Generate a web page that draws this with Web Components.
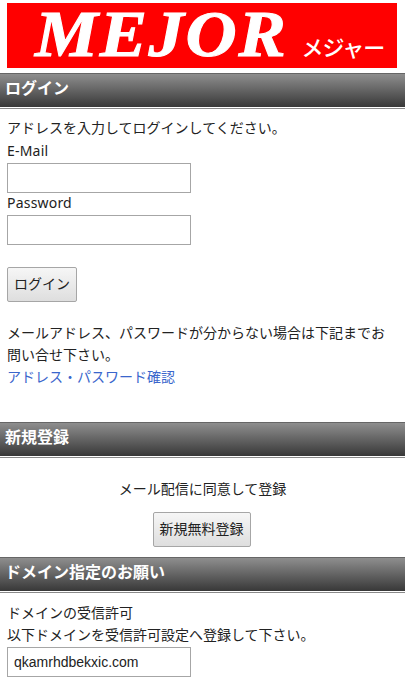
<!DOCTYPE html>
<html lang="ja">
<head>
<meta charset="utf-8">
<title>MEJOR</title>
<style>
  html, body { margin: 0; padding: 0; background: #fff; }
  body { font-family: "Noto Sans", "Noto Sans CJK JP", sans-serif; color: #222; font-size: 14px; }
</style>
</head>
<body>
<mejor-logo></mejor-logo>

<section-bar>ログイン</section-bar>
<login-form></login-form>

<section-bar>新規登録</section-bar>
<register-box></register-box>

<section-bar>ドメイン指定のお願い</section-bar>
<domain-box domain="qkamrhdbekxic.com"></domain-box>

<script>
const fieldCss = `
  .field {
    display: block;
    box-sizing: border-box;
    width: 184px;
    height: 30px;
    margin: 0;
    padding: 0 6px;
    border: 1px solid #a6a6a6;
    background: #fff;
    color: #222;
    font: 14px "Liberation Sans", sans-serif;
    outline: none;
  }
`;

const buttonCss = `
  .btn {
    display: block;
    box-sizing: border-box;
    height: 35px;
    margin: 0;
    padding: 0 6px 3px;
    border: 1px solid #a6a6a6;
    border-radius: 2px;
    background: linear-gradient(#f6f6f6, #dedede);
    color: #222;
    font: 14px "Noto Sans CJK JP", sans-serif;
  }
`;

class MejorLogo extends HTMLElement {
  constructor() {
    super();
    this.attachShadow({ mode: 'open' });
    this.shadowRoot.innerHTML = `
      <style>
        :host { display: block; padding: 3px 8px 5px 7px; }
        .logo {
          height: 65px;
          box-sizing: border-box;
          padding-left: 28px;
          background: #ff0000;
          color: #fff;
          display: flex;
          align-items: baseline;
        }
        .name {
          font: italic bold 65px/62px "Liberation Serif", serif;
          letter-spacing: 1.5px;
          -webkit-text-stroke: 1px #fff;
          transform: scaleX(1.09);
          transform-origin: left;
        }
        .kana {
          margin-left: 35px;
          font: 500 22px/24px "Noto Sans CJK JP", sans-serif;
          letter-spacing: -1px;
        }
      </style>
      <div class="logo"><span class="name">MEJOR</span><span class="kana">メジャー</span></div>
    `;
  }
}

class SectionBar extends HTMLElement {
  constructor() {
    super();
    this.attachShadow({ mode: 'open' });
    this.shadowRoot.innerHTML = `
      <style>
        :host {
          display: block;
          border-bottom: 1px solid #8a8a8a;
          padding-bottom: 1px;
        }
        .bar {
          box-sizing: border-box;
          height: 34px;
          padding: 0 0 7px 5px;
          border-top: 1px solid #666;
          background: linear-gradient(#8e8e8e, #383838);
          color: #fff;
          display: flex;
          align-items: center;
          font: bold 16px "Noto Sans CJK JP", sans-serif;
        }
      </style>
      <div class="bar"><slot></slot></div>
    `;
  }
}

class LoginForm extends HTMLElement {
  constructor() {
    super();
    this.attachShadow({ mode: 'open' });
    this.shadowRoot.innerHTML = `
      <style>
        :host { display: block; padding: 8px 7px 0; height: 313px; box-sizing: border-box; line-height: 22px; }
        ${fieldCss}
        ${buttonCss}
        p { margin: 0; }
        .label { padding-bottom: 1px; letter-spacing: 0.2px; }
        .mail { margin-top: 1px; }
        .pass { margin-top: -1px; }
        .btn { margin-top: 22px; width: 70px; }
        .note { margin-top: 20px; }
        a { color: #3a66cc; text-decoration: none; }
      </style>
      <p>アドレスを入力してログインしてください。</p>
      <div class="label mail">E-Mail</div>
      <input class="field" type="text">
      <div class="label pass">Password</div>
      <input class="field" type="password">
      <button class="btn">ログイン</button>
      <p class="note">メールアドレス、パスワードが分からない場合は下記までお問い合せ下さい。<br><a href="#">アドレス・パスワード確認</a></p>
    `;
  }
}

class RegisterBox extends HTMLElement {
  constructor() {
    super();
    this.attachShadow({ mode: 'open' });
    this.shadowRoot.innerHTML = `
      <style>
        :host {
          display: flex;
          flex-direction: column;
          align-items: center;
          box-sizing: border-box;
          height: 99px;
          padding-top: 20px;
          line-height: 22px;
        }
        ${buttonCss}
        .btn { margin: 12px 2px 0 0; width: 98px; padding: 0 0 4px; }
      </style>
      <div>メール配信に同意して登録</div>
      <button class="btn">新規無料登録</button>
    `;
  }
}

class DomainBox extends HTMLElement {
  constructor() {
    super();
    this.attachShadow({ mode: 'open' });
    this.shadowRoot.innerHTML = `
      <style>
        :host { display: block; padding: 9px 7px 0; line-height: 22px; }
        ${fieldCss}
        p { margin: 0 0 1px; }
      </style>
      <p>ドメインの受信許可<br>以下ドメインを受信許可設定へ登録して下さい。</p>
      <input class="field" type="text" value="${this.getAttribute('domain')}">
    `;
  }
}

customElements.define('mejor-logo', MejorLogo);
customElements.define('section-bar', SectionBar);
customElements.define('login-form', LoginForm);
customElements.define('register-box', RegisterBox);
customElements.define('domain-box', DomainBox);
</script>
</body>
</html>
